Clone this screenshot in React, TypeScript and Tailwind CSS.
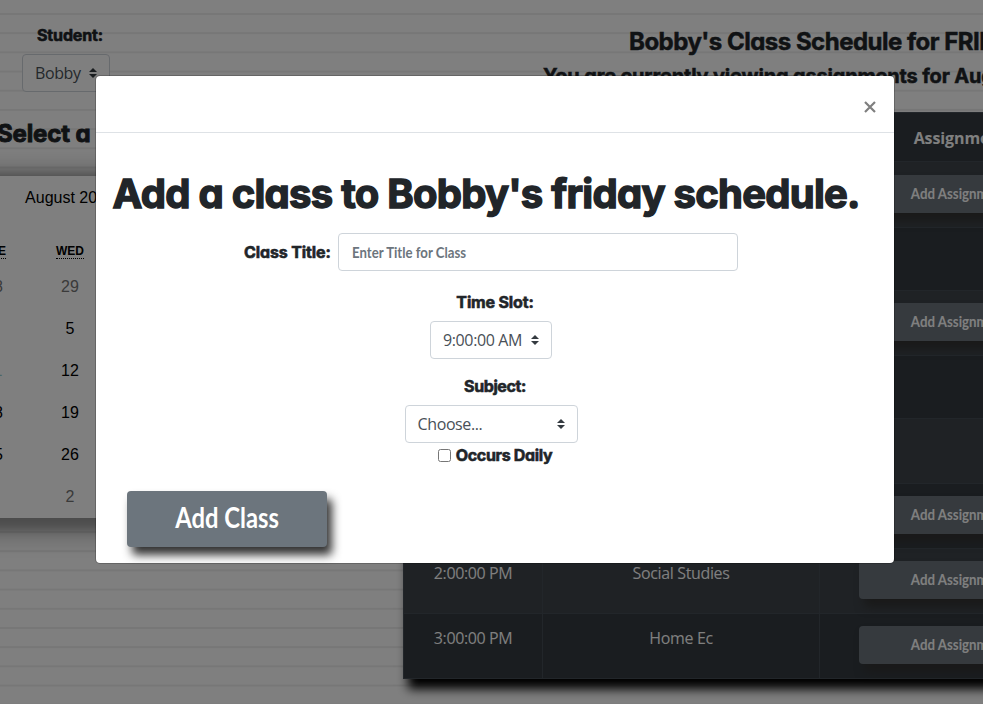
import React from "react";

const round = "font-['Inter','Noto_Sans',sans-serif] font-bold [font-feature-settings:'cv11'_1,'ss03'_1] whitespace-nowrap";
const hand = "font-['Lato','Noto_Sans',sans-serif] font-bold whitespace-nowrap";
const body = "font-['Open_Sans','Noto_Sans',sans-serif] whitespace-nowrap";

function Arrows({ className = "" }: { className?: string }) {
  return (
    <svg viewBox="0 0 4 5" className={"h-[10px] w-2 shrink-0 " + className}>
      <path fill="#343a40" d="M2 0L0 2h4zm0 5L0 3h4z" />
    </svg>
  );
}

function Select({ text, className }: { text: string; className: string }) {
  return (
    <div className={"flex h-[38px] items-center justify-between rounded border border-[#ced4da] bg-white pl-3 pr-3 text-base text-[#495057] " + body + " " + className}>
      <span className="tracking-[-0.38px]">{text}</span>
      <Arrows />
    </div>
  );
}

const weeks = [
  ["28", "29"],
  ["4", "5"],
  ["11", "12"],
  ["18", "19"],
  ["25", "26"],
  ["1", "2"],
];

const rows = [
  { h: "h-[66px]", time: "9:00:00 AM", subject: "Math", button: true },
  { h: "h-[63px]", time: "10:00:00 AM", subject: "", button: false },
  { h: "h-[65px]", time: "11:00:00 AM", subject: "Science", button: true },
  { h: "h-[63px]", time: "12:00:00 PM", subject: "", button: false },
  { h: "h-[65px]", time: "12:30:00 PM", subject: "", button: false },
  { h: "h-[65px]", time: "1:00:00 PM", subject: "Reading", button: true },
  { h: "h-[65px]", time: "2:00:00 PM", subject: "Social Studies", button: true },
  { h: "h-[66px]", time: "3:00:00 PM", subject: "Home Ec", button: true },
];

function Calendar() {
  return (
    <div className="mt-[26px] h-[342px] w-[540px] shrink-0 bg-white font-['Liberation_Sans',Arial,sans-serif] text-base text-black shadow-[0_4px_8px_8px_rgba(0,0,0,0.18),0_6px_24px_10px_rgba(0,0,0,0.3)]">
      <div className="flex h-[44px] items-center justify-center">August 2020</div>
      <div className="mt-[16px] mb-px flex h-[29px] items-center justify-center text-xs font-bold">
        <div className="w-[76px] text-center"><span className="border-b border-dotted border-black">TUE</span></div>
        <div className="w-[76px] text-center"><span className="border-b border-dotted border-black">WED</span></div>
        <div className="w-[76px]" />
      </div>
      {weeks.map(([tue, wed], i) => (
        <div key={i} className="flex h-[42px] items-center justify-center">
          <div className={"w-[76px] text-center " + (i === 0 || i === 5 ? "text-[#757575]" : i === 2 ? "text-[#9cc]" : "")}>{tue}</div>
          <div className={"w-[76px] text-center " + (i === 0 || i === 5 ? "text-[#757575]" : "")}>{wed}</div>
          <div className="w-[76px]" />
        </div>
      ))}
    </div>
  );
}

function Schedule() {
  return (
    <div className={"ml-[403px] w-[700px] bg-[#343a40] text-base text-white shadow-[5px_10px_10px_#000] " + body}>
      <div className="flex h-[49px] items-center border border-b-0 border-[#454d55] font-bold">
        <div className="w-[139px] text-center">Time</div>
        <div className="w-[277px] text-center">Subject</div>
        <div className="w-[284px] pl-[95px] pt-0.5 tracking-[-0.1px]">Assignments</div>
      </div>
      {rows.map((r, i) => (
        <div key={i} className={"flex border-t border-[#454d55] " + r.h + (i % 2 === 0 ? " bg-[#3e444a]" : "") + (i === 7 ? " border-b" : "")}>
          <div className="w-[140px] border-x border-[#454d55] pt-[12px] text-center tracking-[-0.4px]">{r.time}</div>
          <div className="w-[277px] border-r border-[#454d55] pt-[12px] text-center tracking-[-0.35px]">{r.subject}</div>
          <div className={"flex-1 pl-[39px] " + (i === 0 ? "pt-[13px]" : "pt-[12px]")}>
            {r.button && (
              <div className={"flex h-[38px] w-[200px] items-center justify-center rounded bg-[#6c757d] pb-0.5 text-base text-white shadow-[5px_8px_10px_#333] " + hand}>
                <span className="inline-block scale-x-[0.83]">Add Assignment</span>
              </div>
            )}
          </div>
        </div>
      ))}
    </div>
  );
}

function Modal() {
  return (
    <div className="absolute left-[95px] top-[75px] flex h-[489px] w-[800px] flex-col rounded-[5px] border border-black/20 bg-white bg-clip-padding text-[#212529]">
      <div className="flex h-[57px] shrink-0 items-center justify-end border-b border-[#dee2e6] pr-[18px] pt-[6px]">
        <svg viewBox="0 0 12 12" className="h-3 w-3" fill="none" stroke="#7f7f7f" strokeWidth="2.2">
          <path d="M1 1l10 10M11 1L1 11" />
        </svg>
      </div>
      <div className="flex flex-col items-center">
        <h1 className={"mt-[37px] flex h-[48px] w-[765px] items-center text-[40px] tracking-[-0.73px] [-webkit-text-stroke:1.4px_currentColor] " + round}>
          Add a class to Bobby's friday schedule.
        </h1>
        <div className="mt-[15px] flex h-[38px] w-full items-center pl-[148px]">
          <span className={"w-[94px] text-base tracking-[-0.12px] [-webkit-text-stroke:0.6px_currentColor] " + round}>Class Title:</span>
          <div className={"flex h-[38px] w-[400px] items-center rounded border border-[#ced4da] pl-[13px] text-base text-[#6c757d] " + hand}>
            <span className="inline-block origin-left scale-x-[0.825]">Enter Title for Class</span>
          </div>
        </div>
        <div className={"mt-[19px] h-6 text-base tracking-[-0.15px] [-webkit-text-stroke:0.6px_currentColor] " + round}>Time Slot:</div>
        <Select text="9:00:00 AM" className="mt-[7px] w-[122px] -translate-x-1" />
        <div className={"mt-[15px] h-6 text-base tracking-[-0.4px] [-webkit-text-stroke:0.6px_currentColor] " + round}>Subject:</div>
        <Select text="Choose..." className="mt-[7px] w-[173px] -translate-x-1" />
        <div className={"flex h-6 items-center text-base tracking-[-0.33px] [-webkit-text-stroke:0.6px_currentColor] " + round}>
          <span className="mr-[5px] h-[13px] w-[13px] rounded-[2.5px] border border-[#767676]" />
          Occurs Daily
        </div>
      </div>
      <div className={"ml-[31px] mt-[24px] flex h-[56px] w-[200px] shrink-0 items-center justify-center rounded bg-[#6c757d] pb-1 text-[28px] text-white shadow-[5px_8px_10px_#333] " + hand}>
        <span className="inline-block scale-x-[0.85]">Add Class</span>
      </div>
    </div>
  );
}

export default function App() {
  return (
    <div className="relative h-[704px] w-[983px] overflow-hidden bg-white bg-[linear-gradient(#eee_1.6px,transparent_1.6px)] bg-[length:100%_19.2px] bg-[position:0_13px] text-[#212529]">
      <div className="flex">
        <div className="flex h-[704px] w-[140px] shrink-0 flex-col items-center">
          <div className={"mt-[23px] h-6 text-base leading-6 tracking-[-0.15px] [-webkit-text-stroke:0.6px_currentColor] " + round}>Student:</div>
          <Select text="Bobby" className="mt-[7px] w-[88px] -translate-x-1" />
          <h3 className={"mt-[26px] h-8 pl-2 text-2xl leading-8 tracking-[-0.1px] [-webkit-text-stroke:0.9px_currentColor] " + round}>Select a Date</h3>
          <Calendar />
        </div>
        <div className="-ml-[140px] w-[1110px] shrink-0">
          <div className="flex h-[112px] flex-col pt-[26px]">
            <h3 className={"ml-[629px] h-8 text-2xl leading-8 tracking-[-0.5px] [-webkit-text-stroke:0.5px_currentColor] " + round}>Bobby's Class Schedule for FRIDAY</h3>
            <h4 className={"ml-[543px] mt-[4px] h-7 text-xl leading-7 tracking-[-0.17px] [-webkit-text-stroke:0.5px_currentColor] " + round}>You are currently viewing assignments for August 14</h4>
          </div>
          <Schedule />
        </div>
      </div>
      <div className="absolute inset-0 bg-black/50" />
      <Modal />
    </div>
  );
}
